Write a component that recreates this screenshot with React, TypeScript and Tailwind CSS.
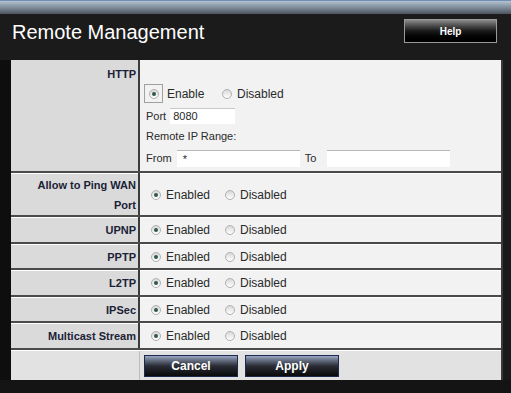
import React from 'react';

const font = { fontFamily: '"Liberation Sans", Arial, sans-serif' };

const Radio = ({ on }: { on?: boolean }) => (
  <span className="inline-flex items-center justify-center w-[10px] h-[10px] rounded-full border border-[#b0b0b0] bg-gradient-to-b from-[#d8d8d8] to-white shrink-0">
    {on && <span className="w-[4px] h-[4px] rounded-full bg-[#2f5a4a]" />}
  </span>
);

const Toggle = ({ on = 'Enabled', off = 'Disabled' }: { on?: string; off?: string }) => (
  <div className="flex items-center text-[12px] text-[#2a2a2a]">
    <div className="flex items-center gap-[5px] w-[76px] pl-[2px]">
      <Radio on />
      <span>{on}</span>
    </div>
    <div className="flex items-center gap-[5px]">
      <Radio />
      <span>{off}</span>
    </div>
  </div>
);

const Row = ({ label, h, children }: { label: React.ReactNode; h: string; children: React.ReactNode }) => (
  <div className={`flex border-b-2 border-[#4a4a4a] ${h}`}>
    <div className="w-[127px] shrink-0 bg-[#dadada] border-t border-white flex items-center justify-end pr-[2px] text-right text-[11px] font-bold text-[#1b2236] leading-[20px]">
      {label}
    </div>
    <div className="w-[2px] bg-[#3c3c3c] shrink-0" />
    <div className="flex-1 bg-[#f2f2f2] border-t border-white flex items-center pl-[9px]">
      {children}
    </div>
  </div>
);

export default function App() {
  return (
    <div className="w-[511px] h-[393px] bg-[#141414] overflow-hidden flex flex-col" style={font}>
      {/* window top strip */}
      <div className="h-[14px] bg-gradient-to-b from-[#b4c2d2] via-[#7f8c9a] to-[#4d5560] border-t border-[#6f8fb4]" />

      {/* header */}
      <div className="h-[46px] bg-[#1b1b1b] flex items-start justify-between pl-[12px] pr-[14px] pt-[5px]">
        <h1 className="text-[20px] leading-[26px] text-white">Remote Management</h1>
        <button className="w-[93px] h-[24px] border border-[#9a9a9a] bg-gradient-to-b from-[#8c8c8c] via-[#1a1a1a] to-black text-white text-[10px] font-bold">
          Help
        </button>
      </div>

      <div className="flex">
        <div className="w-[11px] shrink-0 bg-[#0e0e0e]" />
        <div className="w-[492px] border-r-2 border-[#3a3a3a] flex flex-col">
          {/* HTTP */}
          <div className="flex border-b-2 border-[#4a4a4a] h-[113px]">
            <div className="w-[127px] shrink-0 bg-[#dadada] flex justify-end pr-[2px] pt-[6px] text-[11px] font-bold text-[#1b2236]">
              HTTP
            </div>
            <div className="w-[2px] bg-[#3c3c3c] shrink-0" />
            <div className="flex-1 bg-[#f2f2f2] flex flex-col pl-[4px] pt-[24px] text-[11px] text-[#2a2a2a]">
              <div className="flex items-center text-[12px] h-[19px]">
                <span className="w-[19px] h-[19px] border border-[#a0a0a0] flex items-center justify-center mr-[4px]">
                  <Radio on />
                </span>
                <span className="w-[55px]">Enable</span>
                <span className="flex items-center gap-[5px]">
                  <Radio />
                  <span>Disabled</span>
                </span>
              </div>
              <div className="flex items-center mt-[5px] h-[16px] pl-[2px]">
                <span>Port</span>
                <span className="ml-[4px] w-[65px] h-[16px] bg-white border-t border-[#c8c8c8] pl-[3px] leading-[15px]">8080</span>
              </div>
              <div className="mt-[4px] pl-[2px] h-[16px] leading-[16px]">Remote IP Range:</div>
              <div className="flex items-center mt-[6px] h-[17px] pl-[2px]">
                <span>From</span>
                <span className="ml-[5px] w-[123px] h-[17px] bg-white border-t border-[#b8b8b8] pl-[6px] leading-[17px]">*</span>
                <span className="ml-[5px] w-[22px]">To</span>
                <span className="w-[123px] h-[17px] bg-white border-t border-[#b8b8b8]" />
              </div>
            </div>
          </div>

          <Row label={<span className="leading-[20px]">Allow to Ping WAN<br />Port</span>} h="h-[44px]">
            <Toggle />
          </Row>
          <Row label="UPNP" h="h-[27px]"><Toggle /></Row>
          <Row label="PPTP" h="h-[26px]"><Toggle /></Row>
          <Row label="L2TP" h="h-[27px]"><Toggle /></Row>
          <Row label="IPSec" h="h-[26px]"><Toggle /></Row>
          <Row label="Multicast Stream" h="h-[27px]"><Toggle /></Row>

          {/* buttons */}
          <div className="flex h-[30px] bg-[#e2e2e2] border-t border-white">
            <div className="w-[129px] shrink-0 border-r border-[#bcbcbc]" />
            <div className="flex items-start gap-[7px] pl-[4px] pt-[4px]">
              <button className="w-[94px] h-[22px] border border-[#1d2850] bg-gradient-to-b from-[#9aa8c4] via-[#2a2d36] to-[#0a0a0a] text-white text-[12px] font-bold">
                Cancel
              </button>
              <button className="w-[94px] h-[22px] border border-[#1d2850] bg-gradient-to-b from-[#9aa8c4] via-[#2a2d36] to-[#0a0a0a] text-white text-[12px] font-bold">
                Apply
              </button>
            </div>
          </div>
        </div>
        <div className="flex-1 bg-[#1a1a1a]" />
      </div>
    </div>
  );
}
